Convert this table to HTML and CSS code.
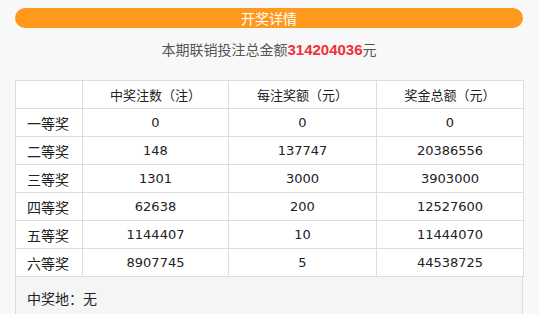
FILE: index.html
```html
<!DOCTYPE html>
<html lang="zh">
<head>
<meta charset="utf-8">
<link rel="stylesheet" href="styles.css">
</head>
<body>
<div class="wrap">
  <div class="title">开奖详情</div>
  <div class="summary">本期联销投注总金额<b class="amount">314204036</b>元</div>
  <table class="prize">
    <colgroup>
      <col class="c1"><col class="c2"><col class="c3"><col class="c4">
    </colgroup>
    <thead>
      <tr><th></th><th>中奖注数（注）</th><th>每注奖额（元）</th><th>奖金总额（元）</th></tr>
    </thead>
    <tbody>
      <tr><td>一等奖</td><td>0</td><td>0</td><td>0</td></tr>
      <tr><td>二等奖</td><td>148</td><td>137747</td><td>20386556</td></tr>
      <tr><td>三等奖</td><td>1301</td><td>3000</td><td>3903000</td></tr>
      <tr><td>四等奖</td><td>62638</td><td>200</td><td>12527600</td></tr>
      <tr><td>五等奖</td><td>1144407</td><td>10</td><td>11444070</td></tr>
      <tr><td>六等奖</td><td>8907745</td><td>5</td><td>44538725</td></tr>
    </tbody>
  </table>
  <div class="place">中奖地：无</div>
</div>
</body>
</html>
```

FILE: styles.css
```css
html, body {
  margin: 0;
  padding: 0;
  background: #f8f8f8;
}
body {
  font-family: "Noto Sans CJK SC", "Liberation Sans", sans-serif;
  font-size: 14px;
  color: #333;
}
.wrap {
  width: 508px;
  margin-left: 15px;
  padding-top: 8px;
}
.title {
  height: 20px;
  line-height: 20px;
  border-radius: 10px;
  background: #ff991e;
  color: #fff;
  text-align: center;
  font-size: 14px;
}
.summary {
  margin-top: 11px;
  height: 20px;
  line-height: 20px;
  text-align: center;
  color: #555;
  overflow: hidden;
}
.amount {
  color: #f0303a;
  font-family: "Liberation Sans", "Noto Sans", sans-serif;
  font-weight: bold;
  font-size: 15px;
  line-height: 20px;
}
.prize {
  margin-top: 21px;
  width: 508px;
  border-collapse: collapse;
  background: #fff;
  table-layout: fixed;
}
.c1 { width: 67px; }
.c2 { width: 146px; }
.c3 { width: 148px; }
.c4 { width: 147px; }
.prize th, .prize td {
  border: 1px solid #ddd;
  height: 27px;
  padding: 0;
  text-align: center;
  font-weight: normal;
  font-size: 14px;
  line-height: 18px;
  color: #222;
}
.prize th {
  font-size: 13px;
}
.prize td:first-child {
  text-align: left;
  padding-left: 11px;
}
.prize td:not(:first-child) {
  font-family: "DejaVu Sans", "Liberation Sans", sans-serif;
  font-size: 13px;
}
.place {
  border-left: 1px solid #ddd;
  border-right: 1px solid #ddd;
  background: #f5f5f5;
  padding: 11px 11px 10px;
  line-height: 20px;
  color: #222;
}
```
